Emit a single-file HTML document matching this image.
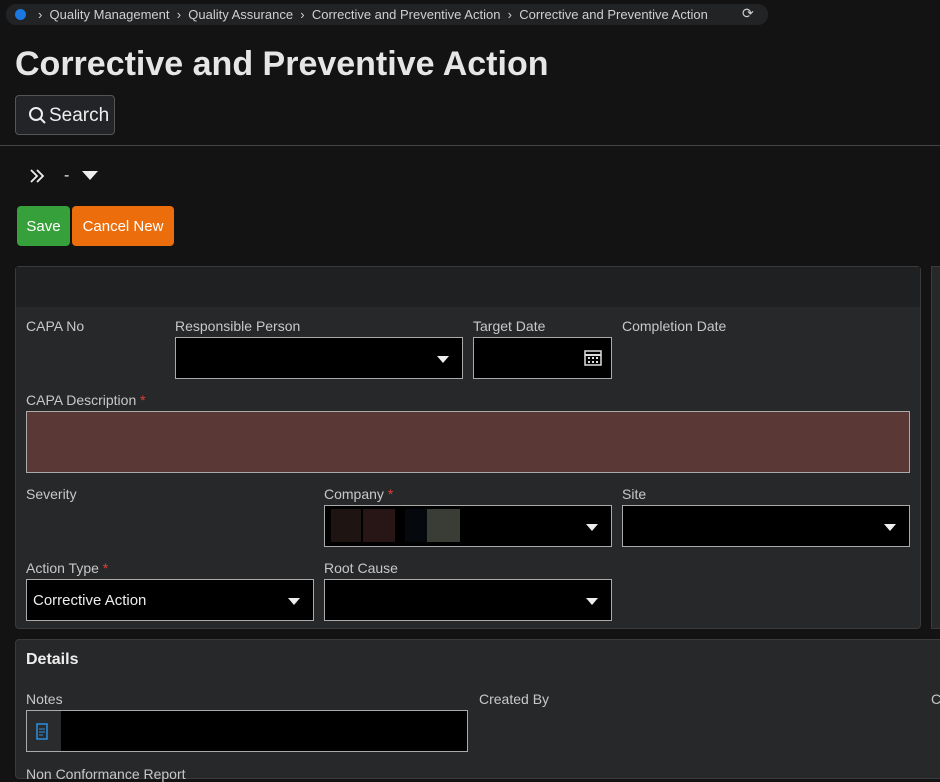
<!DOCTYPE html><html><head><style>
*{box-sizing:border-box;margin:0;padding:0}
body{width:940px;height:771px;overflow:hidden;background:#131313;font-family:"Liberation Sans",sans-serif;color:#ddd;position:relative;font-size:14px}
.a{position:absolute}
.lbl{position:absolute;font-size:14px;color:#c8c8c8}
.inp{position:absolute;background:#000;border:1px solid #aaa;height:42px}
.caret{position:absolute;right:13px;top:18px;width:0;height:0;border-left:6px solid transparent;border-right:6px solid transparent;border-top:7px solid #eee}
.req{color:#e0403a}
</style></head><body>
<div class="a" style="left:6px;top:4px;width:762px;height:21px;background:#222325;border-radius:10px"></div>
<div class="a" style="left:15px;top:9px;width:11px;height:11px;border-radius:50%;background:#1a78e0"></div>
<div class="a" style="left:38px;top:7px;font-size:13px;color:#d0d0d0;white-space:nowrap">›&nbsp; Quality Management &nbsp;›&nbsp; Quality Assurance &nbsp;›&nbsp; Corrective and Preventive Action &nbsp;›&nbsp; Corrective and Preventive Action</div>
<div class="a" style="left:742px;top:5px;font-size:14px;color:#d0d0d0">⟳</div>
<div class="a" style="left:15px;top:45px;font-size:34px;font-weight:bold;color:#e6e6e6">Corrective and Preventive Action</div>
<div class="a" style="left:15px;top:95px;width:100px;height:40px;background:#232427;border:1px solid #555;border-radius:4px"></div>
<svg class="a" style="left:28px;top:106px" width="18" height="18"><circle cx="8" cy="8" r="6" stroke="#eee" stroke-width="2" fill="none"/><line x1="12" y1="12" x2="17" y2="17" stroke="#eee" stroke-width="2"/></svg>
<div class="a" style="left:49px;top:105px;font-size:19px;color:#eee">Search</div>
<div class="a" style="left:0;top:145px;width:940px;height:1px;background:#444"></div>
<svg class="a" style="left:29px;top:168px" width="16" height="16"><path d="M2 2 L8 8 L2 14 M8 2 L14 8 L8 14" stroke="#eee" stroke-width="1.8" fill="none"/></svg>
<div class="a" style="left:64px;top:167px;font-size:16px;color:#eee">-</div>
<div class="a" style="left:82px;top:171px;border-left:8px solid transparent;border-right:8px solid transparent;border-top:9px solid #eee"></div>
<div class="a" style="left:17px;top:206px;width:53px;height:40px;background:#36a03a;border-radius:4px;color:#fff;font-size:15px;text-align:center;line-height:42px">Save</div>
<div class="a" style="left:72px;top:206px;width:102px;height:40px;background:#ec6d0c;border-radius:4px;color:#fff;font-size:15px;text-align:center;line-height:42px">Cancel New</div>
<div class="a" style="left:15px;top:266px;width:906px;height:363px;background:#27282a;border:1px solid #3a3a3a;border-radius:4px"></div>
<div class="a" style="left:16px;top:267px;width:904px;height:40px;background:#1f2022"></div>
<div class="a" style="left:931px;top:266px;width:20px;height:363px;background:#27282a;border:1px solid #3a3a3a"></div>
<div class="lbl" style="left:26px;top:318px">CAPA No</div>
<div class="lbl" style="left:175px;top:318px">Responsible Person</div>
<div class="inp" style="left:175px;top:337px;width:288px"><div class="caret"></div></div>
<div class="lbl" style="left:473px;top:318px">Target Date</div>
<div class="inp" style="left:473px;top:337px;width:139px"><svg class="a" style="left:110px;top:10px" width="18" height="18"><rect x="1" y="3" width="16" height="14" fill="none" stroke="#ddd" stroke-width="1.5"/><line x1="1" y1="7" x2="17" y2="7" stroke="#ddd" stroke-width="2"/><g fill="#ddd"><rect x="4" y="9" width="2" height="2"/><rect x="8" y="9" width="2" height="2"/><rect x="12" y="9" width="2" height="2"/><rect x="4" y="13" width="2" height="2"/><rect x="8" y="13" width="2" height="2"/><rect x="12" y="13" width="2" height="2"/></g></svg></div>
<div class="lbl" style="left:622px;top:318px">Completion Date</div>
<div class="lbl" style="left:26px;top:392px">CAPA Description <span class="req">*</span></div>
<div class="inp" style="left:26px;top:411px;width:884px;height:62px;background:#5a3836"></div>
<div class="lbl" style="left:26px;top:486px">Severity</div>
<div class="lbl" style="left:324px;top:486px">Company <span class="req">*</span></div>
<div class="inp" style="left:324px;top:505px;width:288px"><div class="a" style="left:6px;top:3px;width:30px;height:33px;background:#1e1412"></div><div class="a" style="left:38px;top:3px;width:32px;height:33px;background:#281616"></div><div class="a" style="left:80px;top:3px;width:22px;height:33px;background:#05080c"></div><div class="a" style="left:102px;top:3px;width:33px;height:33px;background:#3a3d36"></div><div class="caret"></div></div>
<div class="lbl" style="left:622px;top:486px">Site</div>
<div class="inp" style="left:622px;top:505px;width:288px"><div class="caret"></div></div>
<div class="lbl" style="left:26px;top:560px">Action Type <span class="req">*</span></div>
<div class="inp" style="left:26px;top:579px;width:288px"><div class="a" style="left:6px;top:12px;font-size:15px;color:#eee">Corrective Action</div><div class="caret"></div></div>
<div class="lbl" style="left:324px;top:560px">Root Cause</div>
<div class="inp" style="left:324px;top:579px;width:288px"><div class="caret"></div></div>
<div class="a" style="left:15px;top:639px;width:940px;height:140px;background:#27282a;border:1px solid #3a3a3a;border-radius:4px"></div>
<div class="a" style="left:26px;top:651px;font-size:16px;font-weight:bold;color:#eee">Details</div>
<div class="lbl" style="left:26px;top:691px">Notes</div>
<div class="inp" style="left:26px;top:710px;width:442px;background:#000"><div class="a" style="left:0;top:0;width:34px;height:40px;background:#2a2b2d"></div><svg class="a" style="left:9px;top:11px" width="12" height="18"><rect x="1" y="2" width="10" height="15" fill="none" stroke="#2a8ee0" stroke-width="1.5"/><line x1="3" y1="7" x2="9" y2="7" stroke="#2a8ee0"/><line x1="3" y1="10" x2="9" y2="10" stroke="#2a8ee0"/><line x1="3" y1="13" x2="7" y2="13" stroke="#2a8ee0"/></svg></div>
<div class="lbl" style="left:479px;top:691px">Created By</div>
<div class="lbl" style="left:931px;top:691px">C</div>
<div class="lbl" style="left:26px;top:766px">Non Conformance Report</div>
</body></html>
